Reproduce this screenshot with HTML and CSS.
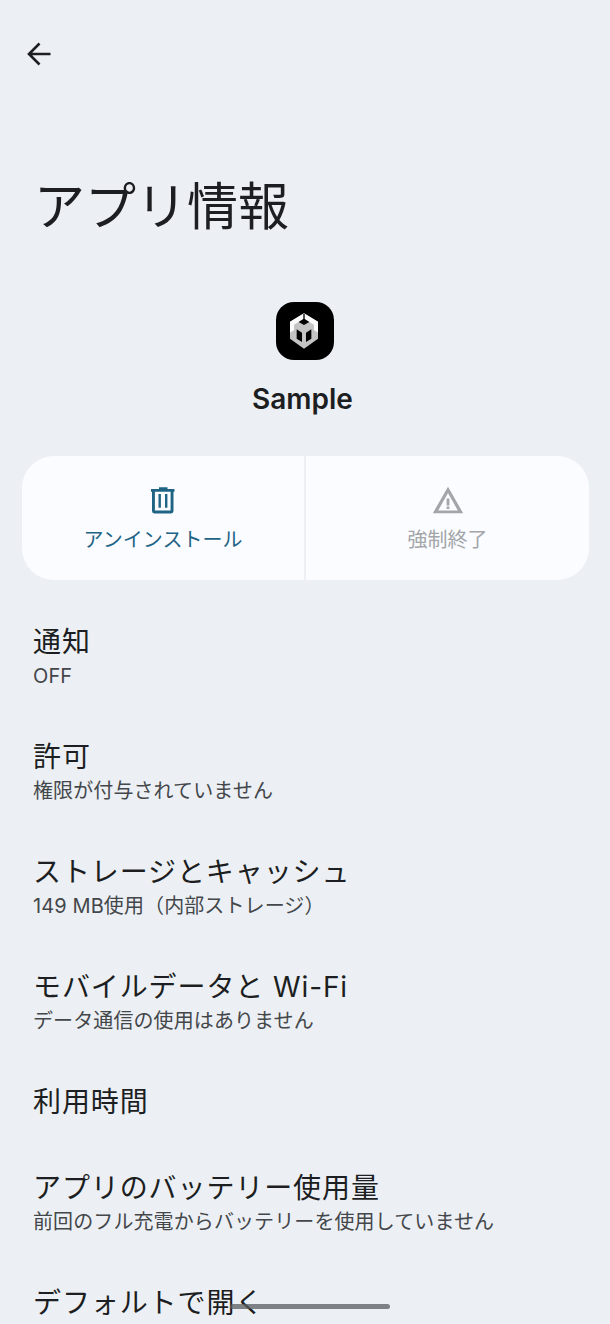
FILE: index.html
```html
<!DOCTYPE html>
<html lang="ja">
<head>
  <meta charset="UTF-8"/>
  <meta name="viewport" content="width=device-width, initial-scale=1.0"/>
  <title>アプリ情報</title>
  <link rel="stylesheet" href="styles.css">
</head>
<body>
  <div class="screen">
    <header class="top-bar">
      <svg class="back-icon" viewBox="0 0 28 28" width="28" height="28">
        <path d="M24.500 14H3.500M13.500 3.500 3 14l10.500 10.500" fill="none" stroke="#1c1e21" stroke-width="2.600"/>
      </svg>
    </header>

    <h1 class="page-title">アプリ情報</h1>

    <div class="app-head">
      <div class="app-icon">
        <svg viewBox="3 0 120 126" width="40" height="42">
          <path d="M60 10 102 35V86L60 116 18 86V35Z" fill="#c4c4c4"/>
          <path d="M60 10 102 35V68L90 60V44L60 26 30 44V60L18 68V35Z" fill="#fafafa"/>
          <path d="M58 11H62V27L76 36 60 45 44 36 58 27Z" fill="#000"/>
          <path d="M38 58 54 68V96L38 86Z" fill="#000"/>
          <path d="M82 58 66 68V96L82 86Z" fill="#000"/>
        </svg>
      </div>
      <div class="app-name">Sample</div>
    </div>

    <div class="action-card">
      <div class="action uninstall">
        <svg viewBox="0 0 28 28" width="28" height="28">
          <path d="M10 1.300H18.500V3H25.500V5.800H24.500V25A2.400 2.400 0 0 1 22.100 27.400H5.400A2.400 2.400 0 0 1 3 25V5.800H2V3H10ZM5.900 5.800V24.500H21.600V5.800ZM9.500 8H11.900V21.700H9.500ZM16 8H18.400V21.700H16Z" fill="#1f6485" fill-rule="evenodd"/>
        </svg>
        <span class="action-label">アンインストール</span>
      </div>
      <div class="action stop">
        <svg viewBox="0 0 32 28" width="32" height="28">
          <path d="M16 .7 31.200 27.300H.800ZM16 7 6.200 24.500H25.800Z" fill="#a3a5a8" fill-rule="evenodd"/>
          <path d="M14.600 12.500H17.400V19.500H14.600ZM14.600 20.500H17.400V23H14.600Z" fill="#a3a5a8"/>
        </svg>
        <span class="action-label">強制終了</span>
      </div>
    </div>

    <ul class="settings">
      <li class="row"><div class="row-title">通知</div><div class="row-sub">OFF</div></li>
      <li class="row"><div class="row-title">許可</div><div class="row-sub">権限が付与されていません</div></li>
      <li class="row"><div class="row-title">ストレージとキャッシュ</div><div class="row-sub">149 MB使用（内部ストレージ）</div></li>
      <li class="row"><div class="row-title">モバイルデータと Wi-Fi</div><div class="row-sub">データ通信の使用はありません</div></li>
      <li class="row"><div class="row-title">利用時間</div></li>
      <li class="row"><div class="row-title">アプリのバッテリー使用量</div><div class="row-sub">前回のフル充電からバッテリーを使用していません</div></li>
      <li class="row"><div class="row-title">デフォルトで開く</div></li>
    </ul>

    <div class="home-bar"></div>
  </div>
</body>
</html>
```

FILE: styles.css
```css
html, body {
  margin: 0;
  padding: 0;
  background-color: #ecf0f5;
}

body {
  font-family: "Inter", "Noto Sans CJK JP", sans-serif;
  color: #1c1e21;
}

.screen {
  position: relative;
  width: 610px;
  height: 1324px;
  overflow: hidden;
}

.top-bar {
  display: flex;
  padding: 40px 26px 0;
  height: 88px;
  box-sizing: border-box;
}

.page-title {
  margin: 80px 0 0 34px;
  font-size: 51px;
  font-weight: 400;
  line-height: 78px;
}

.app-head {
  display: flex;
  flex-direction: column;
  align-items: center;
  margin-top: 56px;
}

.app-icon {
  width: 58px;
  height: 58px;
  border-radius: 18px;
  background-color: #000;
  display: flex;
  align-items: center;
  justify-content: center;
}

.app-name {
  margin: 19px 5px 0 0;
  font-size: 28px;
  font-weight: 600;
  line-height: 40px;
}

.action-card {
  display: flex;
  margin: 37px 21px 0 22px;
  height: 124px;
  border-radius: 32px;
  background-color: #fafcff;
  overflow: hidden;
}

.action {
  flex: 1;
  display: flex;
  flex-direction: column;
  align-items: center;
  padding-top: 30px;
  box-sizing: border-box;
}

.action.uninstall {
  flex: 0 0 284px;
  border-right: 2px solid #ecf0f5;
  color: #1f6485;
}

.action.stop {
  color: #a3a5a8;
}

.action-label {
  margin-top: 11px;
  font-size: 20px;
  line-height: 30px;
}

.settings {
  list-style: none;
  margin: 19px 0 0;
  padding: 0;
}

.row {
  padding: 24px 33px;
}

.row-title {
  font-size: 28px;
  line-height: 38px;
  letter-spacing: 0.9px;
}

.row-sub {
  padding-top: 2px;
  font-size: 20px;
  line-height: 27px;
  letter-spacing: 0.1px;
  color: #44474a;
}

.home-bar {
  position: absolute;
  left: 230px;
  top: 1304px;
  width: 160px;
  height: 5px;
  border-radius: 3px;
  background-color: rgba(90, 92, 95, 0.75);
}
```
